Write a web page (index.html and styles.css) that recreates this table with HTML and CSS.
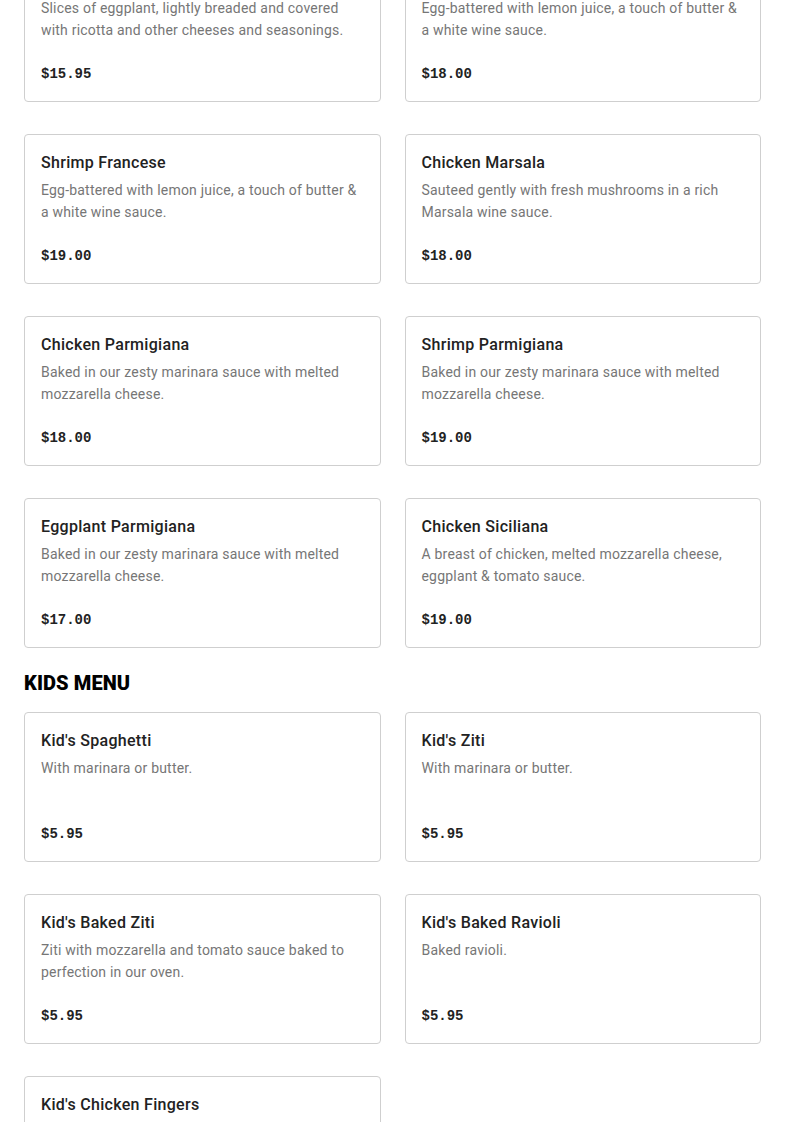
FILE: index.html
```html
<!DOCTYPE html>
<html lang="en">
<head>
<meta charset="utf-8">
<title>Menu</title>
<link rel="stylesheet" href="styles.css">
</head>
<body>
<main class="menu">
  <section class="section section-first">
    <div class="grid">
      <article class="card">
        <h3 class="title">Eggplant Rollatini</h3>
        <p class="desc">Slices of eggplant, lightly breaded and covered with ricotta and other cheeses and seasonings.</p>
        <p class="price">$15.95</p>
      </article>
      <article class="card">
        <h3 class="title">Chicken Francese</h3>
        <p class="desc">Egg-battered with lemon juice, a touch of butter &amp; a white wine sauce.</p>
        <p class="price">$18.00</p>
      </article>
      <article class="card">
        <h3 class="title">Shrimp Francese</h3>
        <p class="desc">Egg-battered with lemon juice, a touch of butter &amp; a white wine sauce.</p>
        <p class="price">$19.00</p>
      </article>
      <article class="card">
        <h3 class="title">Chicken Marsala</h3>
        <p class="desc">Sauteed gently with fresh mushrooms in a rich Marsala wine sauce.</p>
        <p class="price">$18.00</p>
      </article>
      <article class="card">
        <h3 class="title">Chicken Parmigiana</h3>
        <p class="desc">Baked in our zesty marinara sauce with melted mozzarella cheese.</p>
        <p class="price">$18.00</p>
      </article>
      <article class="card">
        <h3 class="title">Shrimp Parmigiana</h3>
        <p class="desc">Baked in our zesty marinara sauce with melted mozzarella cheese.</p>
        <p class="price">$19.00</p>
      </article>
      <article class="card">
        <h3 class="title">Eggplant Parmigiana</h3>
        <p class="desc">Baked in our zesty marinara sauce with melted mozzarella cheese.</p>
        <p class="price">$17.00</p>
      </article>
      <article class="card">
        <h3 class="title">Chicken Siciliana</h3>
        <p class="desc">A breast of chicken, melted mozzarella cheese, eggplant &amp; tomato sauce.</p>
        <p class="price">$19.00</p>
      </article>
    </div>
  </section>
  <section class="section">
    <h2 class="section-title">KIDS MENU</h2>
    <div class="grid">
      <article class="card">
        <h3 class="title">Kid's Spaghetti</h3>
        <p class="desc">With marinara or butter.</p>
        <p class="price">$5.95</p>
      </article>
      <article class="card">
        <h3 class="title">Kid's Ziti</h3>
        <p class="desc">With marinara or butter.</p>
        <p class="price">$5.95</p>
      </article>
      <article class="card">
        <h3 class="title">Kid's Baked Ziti</h3>
        <p class="desc">Ziti with mozzarella and tomato sauce baked to perfection in our oven.</p>
        <p class="price">$5.95</p>
      </article>
      <article class="card">
        <h3 class="title">Kid's Baked Ravioli</h3>
        <p class="desc">Baked ravioli.</p>
        <p class="price">$5.95</p>
      </article>
      <article class="card">
        <h3 class="title">Kid's Chicken Fingers</h3>
        <p class="desc">Served with french fries.</p>
        <p class="price">$5.95</p>
      </article>
    </div>
  </section>
</main>
</body>
</html>
```

FILE: styles.css
```css
* { box-sizing: border-box; }
html, body { margin: 0; padding: 0; background: #fff; }
body {
  font-family: Roboto, "Liberation Sans", Arial, sans-serif;
  color: #222;
}
.menu {
  padding: 0 24px;
  margin-top: -48px;
}
.section-title {
  margin: 23px 0 17px;
  font-family: Roboto, "Liberation Sans", Arial, sans-serif;
  font-weight: 900;
  font-size: 20px;
  line-height: 24px;
  letter-spacing: 0.1px;
  color: #000;
}
.grid {
  display: grid;
  grid-template-columns: 1fr 1fr;
  column-gap: 24px;
  row-gap: 32px;
}
.card {
  display: flex;
  flex-direction: column;
  height: 150px;
  padding: 16px 16px 13px;
  border: 1px solid #cfcfcf;
  border-radius: 4px;
  background: #fff;
}
.title {
  margin: 0;
  font-size: 16px;
  line-height: 24px;
  font-weight: 500;
  letter-spacing: 0.3px;
  color: #222;
}
.desc {
  margin: 4px 0 0;
  font-size: 14px;
  line-height: 22px;
  letter-spacing: 0.2px;
  color: #767676;
}
.price {
  margin: auto 0 0;
  font-family: "Liberation Mono", "Courier New", monospace;
  font-weight: 700;
  font-size: 14px;
  line-height: 27px;
  color: #222;
}
```
